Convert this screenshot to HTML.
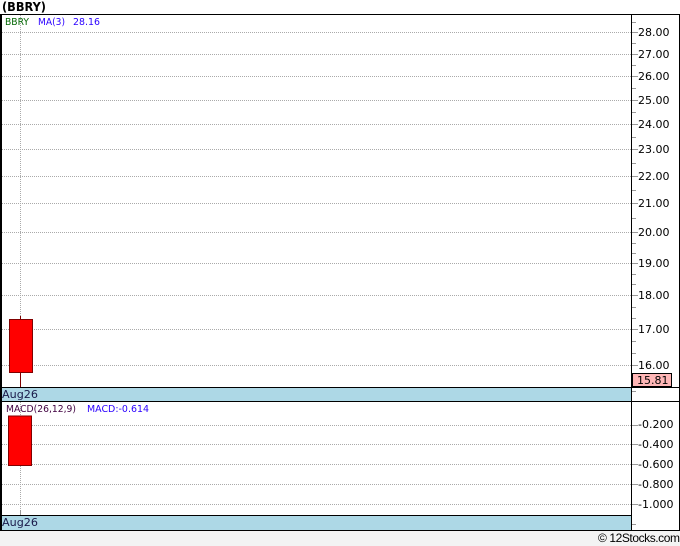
<!DOCTYPE html>
<html><head><meta charset="utf-8"><style>
html,body{margin:0;padding:0;background:#fff;width:680px;height:546px;overflow:hidden}
svg{display:block;position:absolute;left:0;top:0}
text{font-family:"DejaVu Sans",sans-serif}
.ax{font-size:11px;fill:#000}
.sm{font-size:10px}
</style></head><body>
<svg width="680" height="546" viewBox="0 0 680 546" xmlns="http://www.w3.org/2000/svg">
<rect x="0" y="531" width="680" height="15" fill="#f3f3f3"/>
<g stroke="#aaa" stroke-width="1" stroke-dasharray="1 1" fill="none" shape-rendering="crispEdges">
<path d="M2 32.5H632M2 54.5H632M2 76.5H632M2 100.5H632M2 124.5H632M2 149.5H632M2 176.5H632M2 203.5H632M2 232.5H632M2 263.5H632M2 295.5H632M2 329.5H632M2 365.5H632"/>
<path d="M2 425.5H632M2 444.5H632M2 464.5H632M2 484.5H632M2 504.5H632"/>
<path d="M20.5 15V387M20.5 402V510"/>
</g>
<g stroke="#999" stroke-width="1" fill="none" shape-rendering="crispEdges">
<path d="M632 32.5h6M632 54.5h6M632 76.5h6M632 100.5h6M632 124.5h6M632 149.5h6M632 176.5h6M632 203.5h6M632 232.5h6M632 263.5h6M632 295.5h6M632 329.5h6M632 365.5h6"/>
<path d="M632 22.5h4M632 43.5h4M632 65.5h4M632 88.5h4M632 112.5h4M632 137.5h4M632 163.5h4M632 190.5h4M632 218.5h4M632 243.5h4M632 253.5h4M632 274.5h4M632 284.5h4M632 307.5h4M632 318.5h4M632 341.5h4M632 353.5h4M632 391.5h4"/>
<path d="M632 425.5h6M632 444.5h6M632 464.5h6M632 484.5h6M632 504.5h6M632 524.5h4"/>
<path d="M20.5 510V515"/>
</g>
<g shape-rendering="crispEdges">
<rect x="2" y="388" width="630" height="13" fill="#add8e6"/>
<rect x="2" y="516" width="630" height="14" fill="#add8e6"/>
<rect x="20" y="316" width="1" height="71" fill="#800000"/>
<rect x="9.5" y="319.5" width="23" height="53" fill="#f00" stroke="#800000"/>
<rect x="8.5" y="416" width="23" height="49.5" fill="#f00" stroke="#800000"/>
<rect x="0" y="14" width="680" height="1" fill="#000"/>
<rect x="0" y="14" width="2" height="517" fill="#000"/>
<rect x="679" y="14" width="1" height="517" fill="#000"/>
<rect x="631" y="14" width="1" height="517" fill="#000"/>
<rect x="0" y="387" width="680" height="1" fill="#000"/>
<rect x="0" y="401" width="680" height="1" fill="#000"/>
<rect x="0" y="515" width="632" height="1" fill="#000"/>
<rect x="0" y="530" width="680" height="1" fill="#000"/>
<rect x="632.5" y="373.5" width="39" height="13" fill="#ffb6b6" stroke="#000"/>
</g>
<text x="2" y="11" font-weight="bold" fill="#000" style="font-size:12px" textLength="44" lengthAdjust="spacingAndGlyphs">(BBRY)</text>
<text class="sm" x="5" y="25" fill="#006400" textLength="24" lengthAdjust="spacingAndGlyphs">BBRY</text>
<text class="sm" x="38" y="25" fill="#2a00ff" textLength="27" lengthAdjust="spacingAndGlyphs">MA(3)</text>
<text class="sm" x="73" y="25" fill="#2a00ff" textLength="27" lengthAdjust="spacingAndGlyphs">28.16</text>
<text class="sm" x="6" y="412" fill="#400040" textLength="70" lengthAdjust="spacingAndGlyphs">MACD(26,12,9)</text>
<text class="sm" x="87" y="412" fill="#2a00ff" textLength="62" lengthAdjust="spacingAndGlyphs">MACD:-0.614</text>
<text x="2" y="398" style="font-size:11px" fill="#1a1a4a" textLength="36" lengthAdjust="spacingAndGlyphs">Aug26</text>
<text x="2" y="526" style="font-size:11px" fill="#1a1a4a" textLength="36" lengthAdjust="spacingAndGlyphs">Aug26</text>
<g class="ax">
<text class="ax" x="638" y="36">28.00</text>
<text class="ax" x="638" y="58">27.00</text>
<text class="ax" x="638" y="80">26.00</text>
<text class="ax" x="638" y="104">25.00</text>
<text class="ax" x="638" y="128">24.00</text>
<text class="ax" x="638" y="153">23.00</text>
<text class="ax" x="638" y="180">22.00</text>
<text class="ax" x="638" y="207">21.00</text>
<text class="ax" x="638" y="236">20.00</text>
<text class="ax" x="638" y="267">19.00</text>
<text class="ax" x="638" y="299">18.00</text>
<text class="ax" x="638" y="333">17.00</text>
<text class="ax" x="638" y="369">16.00</text>
<text class="ax" x="637" y="384">15.81</text>
<text class="ax" x="638" y="428">-0.200</text>
<text class="ax" x="638" y="448">-0.400</text>
<text class="ax" x="638" y="468">-0.600</text>
<text class="ax" x="638" y="488">-0.800</text>
<text class="ax" x="638" y="508">-1.000</text>
</g>
<text x="598" y="542" style="font-size:12px;font-family:'Liberation Sans',sans-serif" fill="#000" textLength="82" lengthAdjust="spacing">© 12Stocks.com</text>
</svg>
</body></html>
